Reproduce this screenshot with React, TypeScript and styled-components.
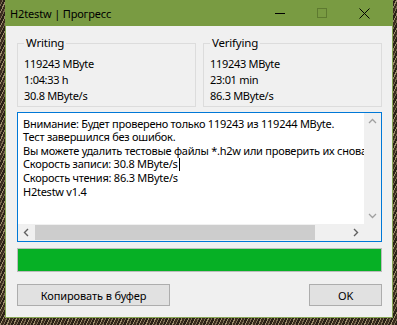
import React from "react";
import styled, { createGlobalStyle } from "styled-components";

const Global = createGlobalStyle`
  html, body { margin: 0; padding: 0; }
  body {
    width: 397px; height: 325px; overflow: hidden;
    font-family: "Noto Sans", "Open Sans", sans-serif;
  }
`;

const Desktop = styled.div`
  width: 397px;
  height: 325px;
  background:
    repeating-linear-gradient(115deg, #3b2d1f 0 2px, #7a6a50 2px 3px, #2a2016 3px 5px, #9a8a6a 5px 6px);
  padding-left: 5px;
  box-sizing: border-box;
`;

const Window = styled.div`
  width: 388px;
  height: 318px;
  box-sizing: border-box;
  background: #f0f0f0;
  border: 1px solid #86a653;
  border-top: none;
  display: flex;
  flex-direction: column;
`;

const TitleBar = styled.div`
  height: 26px;
  margin: 0 -1px;
  background: #799b42;
  display: flex;
  align-items: center;
  padding: 0 8px 0 5px;
  font-size: 11px;
  letter-spacing: -0.15px;
  color: #000;
`;

const Title = styled.div`
  flex: 1;
`;

const CtrlBtn = styled.div`
  width: 42px;
  height: 26px;
  display: flex;
  align-items: center;
  justify-content: center;
`;

const Body = styled.div`
  flex: 1;
  padding: 10px 10px 0 11px;
  display: flex;
  flex-direction: column;
`;

const Groups = styled.div`
  display: flex;
  gap: 7px;
`;

const Group = styled.fieldset`
  flex: 1;
  margin: 0;
  padding: 6px 0 4px 6px;
  border: 1px solid #dcdcdc;
  height: 71px;
  box-sizing: border-box;
  min-width: 0;
`;

const Legend = styled.legend`
  font-size: 11.5px;
  letter-spacing: -0.2px;
  padding: 0 2px;
  margin-left: 0;
  color: #000;
  line-height: 14px;
`;

const Line = styled.div`
  font-size: 11px;
  letter-spacing: -0.3px;
  line-height: 16px;
  color: #000;
  white-space: nowrap;
`;

const TextBox = styled.div`
  margin-top: 5px;
  height: 130px;
  box-sizing: border-box;
  border: 1px solid #0078d7;
  background: #fff;
  display: grid;
  grid-template-columns: 1fr 17px;
  grid-template-rows: 1fr 17px;
`;

const TextArea = styled.div`
  padding: 4px 0 0 5px;
  overflow: hidden;
  font-size: 11px;
  letter-spacing: -0.25px;
  line-height: 13.4px;
  color: #000;
  white-space: nowrap;
`;

const Caret = styled.span`
  display: inline-block;
  width: 1px;
  height: 13px;
  margin-left: 1px;
  background: #000;
  vertical-align: -3px;
`;

const VScroll = styled.div`
  background: #f0f0f0;
  display: flex;
  flex-direction: column;
  justify-content: space-between;
  align-items: center;
  padding: 4px 0;
`;

const HScroll = styled.div`
  background: #f0f0f0;
  display: flex;
  align-items: center;
`;

const Arrow = styled.div`
  width: 17px;
  height: 17px;
  display: flex;
  align-items: center;
  justify-content: center;
  flex: none;
`;

const Thumb = styled.div`
  flex: 1;
  height: 15px;
  background: #cdcdcd;
  margin-right: 32px;
`;

const Corner = styled.div`
  background: #f0f0f0;
`;

const Progress = styled.div`
  margin-top: 6px;
  height: 24px;
  box-sizing: border-box;
  border: 1px solid #bcbcbc;
  background: #e6e6e6;
`;

const ProgressFill = styled.div`
  height: 100%;
  background: #06b025;
`;

const Buttons = styled.div`
  margin-top: 12px;
  display: flex;
  justify-content: space-between;
`;

const Button = styled.div<{ $w: number }>`
  width: ${(p) => p.$w}px;
  height: 22px;
  box-sizing: border-box;
  border: 1px solid #adadad;
  background: #e1e1e1;
  font-size: 11px;
  letter-spacing: -0.1px;
  display: flex;
  align-items: center;
  justify-content: center;
  color: #000;
`;

const Chevron = ({ d }: { d: string }) => (
  <svg width="9" height="9" viewBox="0 0 9 9">
    <path d={d} fill="none" stroke="#a0a0a0" strokeWidth="1.3" />
  </svg>
);

const DarkChevron = ({ d }: { d: string }) => (
  <svg width="9" height="9" viewBox="0 0 9 9">
    <path d={d} fill="none" stroke="#606060" strokeWidth="1.4" />
  </svg>
);

export default function App() {
  return (
    <>
      <Global />
      <Desktop>
        <Window>
          <TitleBar>
            <Title>H2testw | Прогресс</Title>
            <CtrlBtn>
              <svg width="10" height="10" viewBox="0 0 10 10">
                <path d="M0 5.5h10" stroke="#000" strokeWidth="1" />
              </svg>
            </CtrlBtn>
            <CtrlBtn>
              <svg width="10" height="10" viewBox="0 0 10 10">
                <rect x="0.5" y="0.5" width="9" height="9" fill="none" stroke="#5e7a30" strokeWidth="1" />
              </svg>
            </CtrlBtn>
            <CtrlBtn>
              <svg width="11" height="11" viewBox="0 0 11 11">
                <path d="M0.5 0.5L10.5 10.5M10.5 0.5L0.5 10.5" stroke="#000" strokeWidth="1" />
              </svg>
            </CtrlBtn>
          </TitleBar>
          <Body>
            <Groups>
              <Group>
                <Legend>Writing</Legend>
                <Line>119243 MByte</Line>
                <Line>1:04:33 h</Line>
                <Line>30.8 MByte/s</Line>
              </Group>
              <Group>
                <Legend>Verifying</Legend>
                <Line>119243 MByte</Line>
                <Line>23:01 min</Line>
                <Line>86.3 MByte/s</Line>
              </Group>
            </Groups>
            <TextBox>
              <TextArea>
                <div>Внимание: Будет проверено только 119243 из 119244 MByte.</div>
                <div>Тест завершился без ошибок.</div>
                <div>Вы можете удалить тестовые файлы *.h2w или проверить их снова</div>
                <div>
                  Скорость записи: 30.8 MByte/s<Caret />
                </div>
                <div>Скорость чтения: 86.3 MByte/s</div>
                <div>H2testw v1.4</div>
              </TextArea>
              <VScroll>
                <Chevron d="M1 6L4.5 2.5L8 6" />
                <Chevron d="M1 3L4.5 6.5L8 3" />
              </VScroll>
              <HScroll>
                <Arrow>
                  <DarkChevron d="M6 1L2.5 4.5L6 8" />
                </Arrow>
                <Thumb />
                <Arrow>
                  <DarkChevron d="M3 1L6.5 4.5L3 8" />
                </Arrow>
              </HScroll>
              <Corner />
            </TextBox>
            <Progress>
              <ProgressFill style={{ width: "100%" }} />
            </Progress>
            <Buttons>
              <Button $w={153}>Копировать в буфер</Button>
              <Button $w={73}>OK</Button>
            </Buttons>
          </Body>
        </Window>
      </Desktop>
    </>
  );
}
